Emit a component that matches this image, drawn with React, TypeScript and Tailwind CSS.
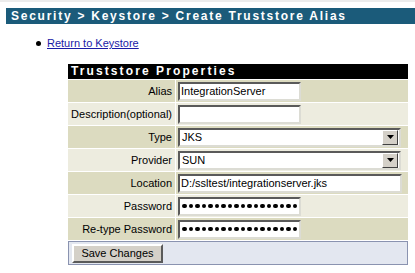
import React from 'react'

const rowDark = 'bg-[#dcdbc0]'
const rowLight = 'bg-[#edecdf]'

function TextBox({ value, w }: { value?: string; w: string }) {
  return (
    <div className={`${w} h-[19px] bg-white border-2 border-t-[#5a5a5a] border-l-[#5a5a5a] border-r-[#dcdcd4] border-b-[#dcdcd4] px-[1px] text-[11px] leading-[15px] text-black whitespace-nowrap overflow-hidden`}>
      {value}
    </div>
  )
}

function Dots({ cursor }: { cursor?: boolean }) {
  return (
    <div className="w-[123px] h-[19px] bg-white border-2 border-t-[#5a5a5a] border-l-[#5a5a5a] border-r-[#dcdcd4] border-b-[#dcdcd4] flex items-center pl-[2px] gap-[2px]">
      {Array.from({ length: 18 }).map((_, i) => (
        <span key={i} className="w-[4.5px] h-[4.5px] rounded-full bg-black shrink-0" />
      ))}
      {cursor && <span className="w-px h-[13px] bg-black ml-[1px]" />}
    </div>
  )
}

function Select({ value }: { value: string }) {
  return (
    <div className="w-[223px] h-[19px] bg-white border-2 border-t-[#5a5a5a] border-l-[#5a5a5a] border-r-[#dcdcd4] border-b-[#dcdcd4] flex items-center justify-between pl-[2px] pr-[1px]">
      <span className="text-[11px] leading-[15px] text-black">{value}</span>
      <span className="w-[16px] h-[15px] bg-[#d4d0c8] border border-t-white border-l-white border-r-[#404040] border-b-[#404040] flex items-center justify-center">
        <svg width="7" height="4" viewBox="0 0 7 4"><path d="M0 0h7L3.5 4z" fill="#000" /></svg>
      </span>
    </div>
  )
}

function Row({ label, dark, children }: { label: string; dark: boolean; children: React.ReactNode }) {
  const bg = dark ? rowDark : rowLight
  return (
    <>
      <div className={`${bg} h-[22px] flex items-center justify-end pr-[3px] text-[11px] text-black`}>{label}</div>
      <div className={`${bg} h-[22px] flex items-center pl-[2px]`}>{children}</div>
    </>
  )
}

export default function App() {
  return (
    <div className="w-[415px] h-[273px] bg-white overflow-hidden" style={{ fontFamily: '"Liberation Sans", Arial, sans-serif' }}>
      <div className="h-[2px] bg-[#ececec]" />
      <div className="ml-[6px] mt-[6px] h-[16px] bg-[#1b5b7a] text-white font-bold text-[12px] leading-[16px] tracking-[1.75px] pl-[5px] whitespace-nowrap">
        Security &gt; Keystore &gt; Create Truststore Alias
      </div>
      <ul className="mt-[13px] pl-[36px] list-none">
        <li className="flex items-center gap-[6px]">
          <span className="w-[5px] h-[5px] rounded-full bg-black" />
          <a href="#" className="text-[11px] leading-[13px] text-[#1a1aa6] underline">Return to Keystore</a>
        </li>
      </ul>
      <div className="ml-[68px] mt-[14px] w-[340px] grid grid-cols-[107px_232px] gap-px">
        <div className="col-span-2 h-[15px] bg-black text-white font-bold text-[12px] leading-[15px] tracking-[2.1px] pl-[3px]">
          Truststore Properties
        </div>
        <Row label="Alias" dark>
          <TextBox w="w-[123px]" value="IntegrationServer" />
        </Row>
        <Row label="Description(optional)" dark={false}>
          <TextBox w="w-[123px]" />
        </Row>
        <Row label="Type" dark>
          <Select value="JKS" />
        </Row>
        <Row label="Provider" dark={false}>
          <Select value="SUN" />
        </Row>
        <Row label="Location" dark>
          <TextBox w="w-[224px]" value="D:/ssltest/integrationserver.jks" />
        </Row>
        <Row label="Password" dark={false}>
          <Dots />
        </Row>
        <Row label="Re-type Password" dark>
          <Dots cursor />
        </Row>
        <div className="col-span-2 h-[24px] bg-[#e3e7f0] border border-[#8a93b0] flex items-center pl-[3px]">
          <button className="h-[19px] w-[91px] bg-[#d4d0c8] border-2 border-t-white border-l-white border-r-[#5a5a5a] border-b-[#5a5a5a] text-[11px] leading-[13px] text-black">
            Save Changes
          </button>
        </div>
      </div>
    </div>
  )
}
